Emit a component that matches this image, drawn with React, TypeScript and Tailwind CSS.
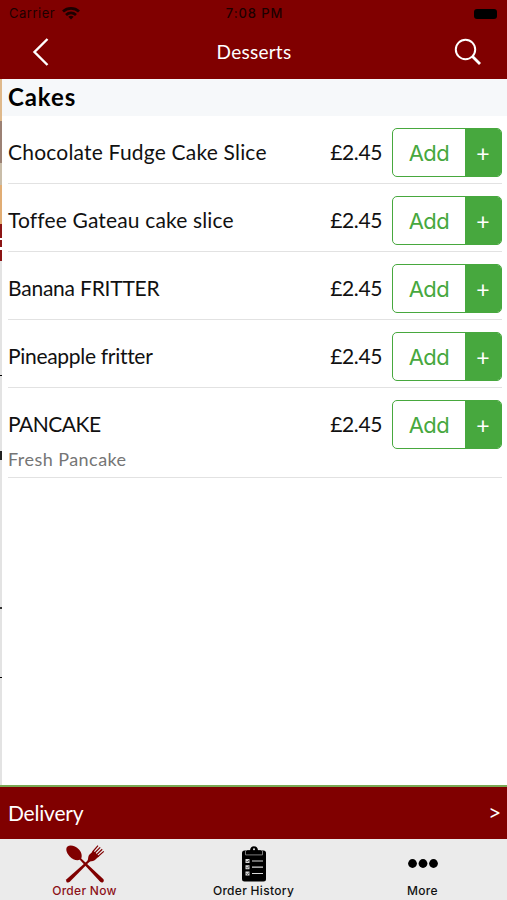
import { ReactNode } from "react";

interface IItem {
  name: string;
  price: string;
  tracking: string;
  description?: string;
}

const ITEMS: IItem[] = [
  { name: "Chocolate Fudge Cake Slice", price: "£2.45", tracking: "tracking-[0.2px]" },
  { name: "Toffee Gateau cake slice", price: "£2.45", tracking: "tracking-[0.15px]" },
  { name: "Banana FRITTER", price: "£2.45", tracking: "tracking-[-0.22px]" },
  { name: "Pineapple fritter", price: "£2.45", tracking: "tracking-[-0.3px]" },
  { name: "PANCAKE", price: "£2.45", tracking: "tracking-[-0.5px]", description: "Fresh Pancake" },
];

const WifiIcon = () => (
  <svg width="18" height="13" viewBox="0 0 18 13" fill="none" stroke="#1c0000" strokeWidth="2.8">
    <path d="M1 4.5C5.500 .4 12.500 .4 17 4.500" />
    <path d="M4 8C7 5.300 11 5.300 14 8" />
    <path d="M9 12.500L6.300 9.800Q9 7.800 11.700 9.800Z" fill="#1c0000" stroke="none" />
  </svg>
);

const CutleryIcon = () => (
  <svg width="40" height="40" viewBox="0 0 40 40" fill="#800000">
    <path d="M2.500 2.500C5 .2 10.500 1.700 14 5.500C17 9 17.200 12.500 16.200 14.500L38.500 35.200Q39.500 37 38 38.300Q36.500 39 35.200 37.800L14.800 15.800C11.500 16.800 7.500 15.500 4.500 12.200C1.300 8.500 .3 4.500 2.500 2.500Z" />
    <path d="M4.800 37.800L24 18.200L22.500 16.800L1.500 35.200Q.5 36.800 1.700 38.200Q3.300 39.200 4.800 37.800Z" />
    <path d="M22 17.200C23.800 15.500 22.500 12.500 24.500 10.500L28.500 6.800L34 12.300L30.500 15.500C28 17.800 25.700 16.600 23.800 18.500Z" />
    <path d="M27.500 8L33 1.700M29.200 9.500L35.200 3.300M31 11.200L37.200 5.200M32.700 12.700L38.800 7.400" stroke="#800000" strokeWidth="1.200" fill="none" />
  </svg>
);

const ClipboardIcon = () => (
  <svg width="26" height="36" viewBox="0 0 26 36">
    <rect x="1" y="4.500" width="24" height="31" rx="2.500" fill="#000" />
    <path d="M5 8.500L6.200 4.300H9Q9.500 .3 13 .3T17 4.300H19.800L21 8.500Z" fill="#000" />
    <path d="M4.500 5L4.500 8.900H21.500V5" fill="none" stroke="#9a9a9a" strokeWidth=".8" />
    <circle cx="13" cy="3.300" r="1" fill="#ebebeb" />
    <g fill="#d8d8d8">
      <path d="M4.500 13h4v4h-4zM4.500 19.200h4v4h-4zM4.500 25.500h4v4h-4z" />
      <path d="M11 14.400h11v1.200H11zM11 20.600h11v1.200H11zM11 26.900h11v1.200H11z" />
    </g>
    <path d="M5.500 15l1 1 1.500-2M5.500 21.200l1 1 1.500-2M5.500 27.500l1 1 1.500-2" fill="none" stroke="#000" strokeWidth=".6" />
  </svg>
);

const MoreIcon = () => (
  <svg width="30" height="10" viewBox="0 0 30 10">
    <circle cx="4.500" cy="4.500" r="4.400" />
    <circle cx="15" cy="4.500" r="4.400" />
    <circle cx="25.500" cy="4.500" r="4.400" />
  </svg>
);

const MenuItem = ({ name, price, tracking, description }: IItem) => (
  <li className={`ml-2 mr-[5px] border-b border-[#e2e2e2] ${description ? "h-[90px]" : "h-[68px]"}`}>
    <div className="flex h-[61px] items-end">
      <span className={`flex h-[49px] flex-1 items-center pb-[2px] font-[Lato] text-[21px] leading-6 [font-variant-ligatures:none] ${tracking}`}>{name}</span>
      <span className="flex h-[49px] items-center pb-[2px] pr-[10px] font-[Lato] text-[21px] leading-6 tracking-[-0.4px]">{price}</span>
      <button className="flex h-[49px] w-[110px] overflow-hidden rounded-[5px] border border-[#47a83e] bg-white" type="button">
        <span className="flex flex-1 items-center justify-center pt-px font-[Inter] text-[22px] font-normal tracking-[-0.5px] text-[#47a83e]">Add</span>
        <span className="flex h-full w-[36px] items-center justify-center bg-[#47a83e] pt-px font-[Lato] text-[23px] text-white">+</span>
      </button>
    </div>
    {description && <p className="-mt-[2px] font-[Lato] text-[18px] leading-6 tracking-[0.45px] text-[#757575]">{description}</p>}
  </li>
);

const Tab = ({ label, active, children }: { label: string; active?: boolean; children: ReactNode }) => (
  <button type="button" className={`flex h-full w-[169px] flex-col items-center ${active ? "text-[#8c1018]" : "text-[#111]"}`}>
    <span className="flex h-[44px] items-center justify-center pt-[5px]">{children}</span>
    <span className="font-[Inter] text-[12px] font-medium leading-[15px] tracking-[0.3px]">{label}</span>
  </button>
);

export default function App() {
  return (
    <main className="flex h-[900px] w-[507px] flex-col overflow-hidden bg-white font-[Lato] text-[#111]">
      <header className="h-[79px] bg-[#800000]">
        <div className="grid h-[27px] grid-cols-3 items-center pl-[9px] pr-[10px] font-[Inter] text-[13px] text-[#1c0000]">
          <span className="flex items-center gap-[7px] tracking-[0.5px]">Carrier <WifiIcon /></span>
          <span className="pl-[3px] text-center font-medium tracking-[0.9px]">7:08 PM</span>
          <span className="h-[10px] w-[23px] justify-self-end rounded-[3px] bg-black" />
        </div>
        <div className="flex h-[50px] items-center justify-between pl-[32px] pr-[25px] text-white">
          <svg width="18" height="30" viewBox="0 0 18 30" fill="none" stroke="currentColor" strokeWidth="2.400">
            <path d="M15.500 2L2.500 15L15.500 28" />
          </svg>
          <h1 className="pl-1 text-[19px] tracking-[0.25px]">Desserts</h1>
          <svg width="28" height="28" viewBox="0 0 28 28" fill="none" stroke="currentColor" strokeWidth="2">
            <circle cx="11.500" cy="11.500" r="9.700" />
            <path d="M18.500 18.500L26 26" strokeWidth="2.800" />
          </svg>
        </div>
      </header>

      <div className="flex min-h-0 flex-1">
        {/* edge of the previous screen */}
        <div className="flex w-[2px] flex-col bg-[#e3e3e3]">
          <span className="h-[42px] bg-[#dfb98b]" />
          <span className="h-[42px] bg-[#9b8174]" />
          <span className="h-[22px] bg-[#c9bda9]" />
          <span className="h-[39px] bg-[#e1ad74]" />
          <span className="h-[14px] bg-[#8c1515]" />
          <span className="h-[2px] bg-white" />
          <span className="h-[7px] bg-[#8c1515]" />
          <span className="h-[3px] bg-white" />
          <span className="h-[11px] bg-[#8c1515]" />
          <span className="mt-[114px] h-px bg-black" />
          <span className="mt-[75px] h-[9px] bg-[#222]" />
          <span className="mt-[147px] h-[2px] bg-[#333]" />
          <span className="mt-[68px] h-px bg-black" />
        </div>
        <section className="flex-1">
          <h2 className="h-[37px] bg-[#f6f8fa] pl-[6px] text-[24px] font-bold leading-[35px] tracking-[0.9px] text-black">Cakes</h2>
          <ul className="-ml-[2px]">
            {ITEMS.map((item) => (
              <MenuItem key={item.name} {...item} />
            ))}
          </ul>
        </section>
      </div>

      <button type="button" className="flex h-[54px] items-center justify-between border-t-2 border-[#79a853] bg-[#800000] pl-2 pr-[6px] text-white">
        <span className="pb-px text-[21px] tracking-[-0.2px]">Delivery</span>
        <span className="pt-px font-[Inter] text-[19px]">&gt;</span>
      </button>
      <nav className="flex h-[61px] bg-[#ebebeb]">
        <Tab label="Order Now" active><CutleryIcon /></Tab>
        <Tab label="Order History"><ClipboardIcon /></Tab>
        <Tab label="More"><MoreIcon /></Tab>
      </nav>
    </main>
  );
}
